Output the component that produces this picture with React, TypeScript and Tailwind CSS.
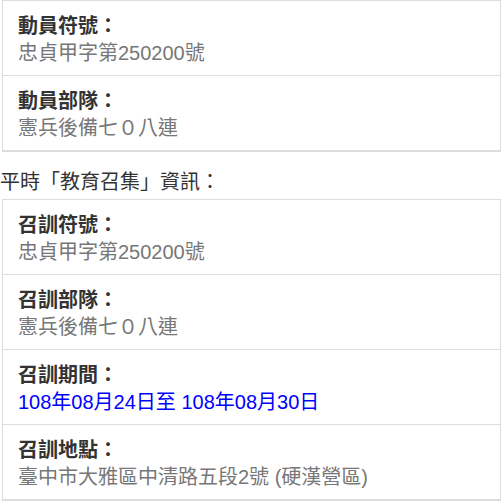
const rows1 = [
  { label: "動員符號：", value: "忠貞甲字第250200號" },
  { label: "動員部隊：", value: "憲兵後備七０八連" },
];

const rows2 = [
  { label: "召訓符號：", value: "忠貞甲字第250200號" },
  { label: "召訓部隊：", value: "憲兵後備七０八連" },
  { label: "召訓期間：", value: "108年08月24日至 108年08月30日", blue: true },
  { label: "召訓地點：", value: "臺中市大雅區中清路五段2號 (硬漢營區)" },
];

type Row = { label: string; value: string; blue?: boolean };

function InfoCard({ rows }: { rows: Row[] }) {
  return (
    <ul className="ml-[2px] w-[499px] border border-b-2 border-[#dddddd] bg-white">
      {rows.map((r, i) => (
        <li
          key={r.label}
          className={`px-[15px] pb-[8px] pt-[12px] leading-[27px] ${i > 0 ? "border-t border-[#dddddd]" : ""}`}
        >
          <div className="font-bold text-[#333333]">{r.label}</div>
          <div className={r.blue ? "text-[#0000ff]" : "text-[#777777]"}>{r.value}</div>
        </li>
      ))}
    </ul>
  );
}

export default function App() {
  return (
    <div
      className="h-[502px] w-[502px] overflow-hidden bg-white text-[20px]"
      style={{ fontFamily: '"Liberation Sans", "Noto Sans CJK TC", sans-serif' }}
    >
      <InfoCard rows={rows1} />
      <p className="mb-[3px] mt-[17px] leading-[27px] text-[#333333]">平時「教育召集」資訊：</p>
      <InfoCard rows={rows2} />
    </div>
  );
}
